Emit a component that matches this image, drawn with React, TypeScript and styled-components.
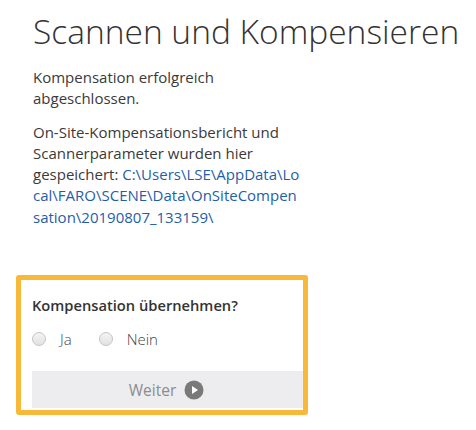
import React from "react";
import styled, { createGlobalStyle } from "styled-components";

const Global = createGlobalStyle`
  html, body { margin: 0; padding: 0; background: #ffffff; }
  body { font-family: "Open Sans", "Liberation Sans", sans-serif; }
`;

const Page = styled.div`
  width: 476px;
  height: 430px;
  box-sizing: border-box;
  padding: 11px 0 0 33px;
  background: #fff;
  color: #333;
`;

const Title = styled.h1`
  margin: 0;
  font-size: 33.5px;
  font-weight: 300;
  color: #333;
  line-height: 40px;
  white-space: nowrap;
`;

const Body = styled.div`
  width: 269.5px;
  margin-top: 16px;
  display: flex;
  flex-direction: column;
  gap: 12px;
`;

const Para = styled.p`
  margin: 0;
  font-size: 15px;
  line-height: 21.3px;
  color: #3a3a3a;
`;

const Path = styled.span`
  color: #1f5ea8;
  word-break: break-all;
`;

const Box = styled.div`
  margin: 47px 0 0 -17px;
  width: 292px;
  box-sizing: border-box;
  border: 5px solid #f8b93a;
  border-radius: 3px;
  padding: 15px 0 2px 11px;
`;

const Question = styled.div`
  font-size: 14.7px;
  font-weight: 600;
  color: #333;
  line-height: 20px;
`;

const Options = styled.div`
  display: flex;
  align-items: center;
  gap: 27px;
  margin-top: 13px;
  height: 22px;
`;

const Option = styled.label`
  display: flex;
  align-items: center;
  gap: 14px;
  font-size: 15px;
  font-weight: 300;
  color: #444;
`;

const Radio = styled.span`
  width: 12px;
  height: 12px;
  border-radius: 50%;
  border: 1px solid #c4c4c4;
  background: linear-gradient(#f4f4f4, #e2e2e2);
  display: inline-block;
`;

const Button = styled.button`
  margin-top: 21px;
  width: 100%;
  height: 37px;
  border: none;
  background: #ededef;
  display: flex;
  align-items: center;
  justify-content: center;
  gap: 8px;
  font-family: "Open Sans", "Liberation Sans", sans-serif;
  font-size: 15.5px;
  color: #8c8c8c;
  padding: 0 2px 0 0;
`;

const PlayIcon = () => (
  <svg width="20" height="20" viewBox="0 0 20 20">
    <circle cx="10" cy="10" r="9.5" fill="#797979" />
    <path d="M8 6 L14 10 L8 14 Z" fill="#fff" />
  </svg>
);

export default function App() {
  return (
    <>
      <Global />
      <Page>
        <Title>Scannen und Kompensieren</Title>
        <Body>
          <Para>Kompensation erfolgreich abgeschlossen.</Para>
          <Para>
            On-Site-Kompensationsbericht und Scannerparameter wurden hier gespeichert:{" "}
            <Path>C:\Users\LSE\AppData\Local\FARO\SCENE\Data\OnSiteCompensation\20190807_133159\</Path>
          </Para>
        </Body>
        <Box>
          <Question>Kompensation übernehmen?</Question>
          <Options>
            <Option>
              <Radio />
              Ja
            </Option>
            <Option>
              <Radio />
              Nein
            </Option>
          </Options>
          <Button>
            Weiter
            <PlayIcon />
          </Button>
        </Box>
      </Page>
    </>
  );
}
